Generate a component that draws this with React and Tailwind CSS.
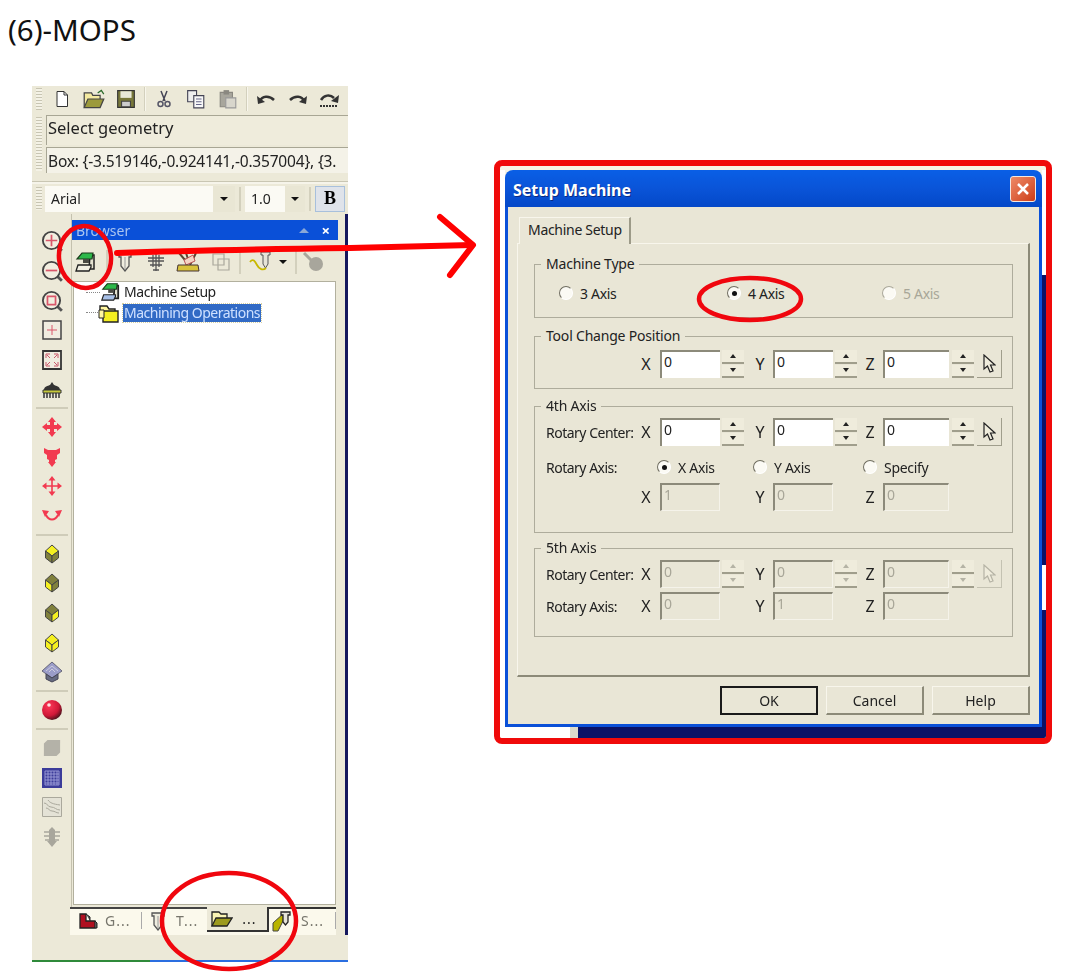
import React from 'react';

const Ico = ({ s = 18, children }) => (
  <svg width={s} height={s} viewBox="0 0 18 18" className="block shrink-0">{children}</svg>
);
const Ico2 = ({ w, h, box, children }) => (
  <svg width={w} height={h} viewBox={box} className="block shrink-0">{children}</svg>
);

// Top toolbar icons
const NewIcon = () => <Ico><path d="M4 1.5h7l3.500 3.500v11.500h-10.500z" fill="#fff" stroke="#333" /><path d="M11 1.500v3.500h3.500" fill="none" stroke="#333" /></Ico>;
const OpenIcon = () => <Ico2 w={22} h={22} box="0 0 18 18"><path d="M1 16V4h6l1 2h6v3" fill="#f3e9a0" stroke="#444" /><path d="M1 16l3-7h13l-3 7z" fill="#9c9a3c" stroke="#444" /><path d="M12 4l3-2 2 3" fill="none" stroke="#2a6a2a" /></Ico2>;
const SaveIcon = () => <Ico2 w={20} h={20} box="0 0 18 18"><path d="M1.500 1.500h15v15h-15z" fill="#77773a" stroke="#333" /><path d="M4 2h10v6H4z" fill="#e8e8d8" /><path d="M5 11h8v5H5z" fill="#ccc" stroke="#444" /></Ico2>;
const CutIcon = () => <Ico><path d="M6 1l4 10M12 1L8 11" stroke="#445" strokeWidth="1.500" /><circle cx="5.500" cy="14" r="2.500" fill="none" stroke="#556" strokeWidth="1.500" /><circle cx="12.500" cy="14" r="2.500" fill="none" stroke="#556" strokeWidth="1.500" /></Ico>;
const CopyIcon = () => <Ico2 w={20} h={20} box="0 0 18 18"><path d="M1.500 1.500h8v10h-8z" fill="#eee" stroke="#445" /><path d="M7 6h9v11H7z" fill="#f8f8f8" stroke="#445" /><path d="M9 9h5M9 11.500h5M9 14h5" stroke="#668" /></Ico2>;
const PasteIcon = () => <Ico2 w={20} h={20} box="0 0 18 18"><path d="M2 3h11v13H2z" fill="#a8a69c" stroke="#8a8880" /><path d="M5 1h5v4H5z" fill="#8a8880" /><path d="M7 8h9v9H7z" fill="#d8d6cc" stroke="#999" /></Ico2>;
const UndoIcon = ({ flip }) => (
  <Ico2 w={22} h={22} box="0 0 22 22">
    <g transform={flip ? 'translate(22 0) scale(-1 1)' : undefined}>
      <path d="M5 13c2-5 9-6 14-1" fill="none" stroke="#333" strokeWidth="2.500" />
      <path d="M2 8l1 8 7-2z" fill="#333" />
    </g>
  </Ico2>
);
const RedoAllIcon = () => (
  <Ico2 w={22} h={22} box="0 0 22 22">
    <path d="M2 12c3-5 9-6 13-2" fill="none" stroke="#333" strokeWidth="2.500" />
    <path d="M20 7l-1 8-7-2z" fill="#333" />
    <path d="M1 18h18" stroke="#333" strokeDasharray="2 1" strokeWidth="2" />
  </Ico2>
);

// Left view toolbar
const Zoom = ({ kind }) => (
  <Ico2 w={23} h={23} box="0 0 20 20">
    <path d="M15 15l4 4" stroke="#555" strokeWidth="2.500" />
    <circle cx="10" cy="10" r="7.500" fill="#f2eee0" stroke="#444" strokeWidth="1.600" />
    {kind === 'in' && <path d="M10 5v10M5 10h10" stroke="#d9566a" strokeWidth="1.500" />}
    {kind === 'out' && <path d="M5 10h10" stroke="#d9566a" strokeWidth="1.500" />}
    {kind === 'win' && <path d="M6.500 6.500h7v7h-7z" fill="none" stroke="#d9566a" strokeWidth="1.500" />}
  </Ico2>
);
const PlusBox = () => <Ico2 w={20} h={20} box="0 0 20 20"><path d="M1 1h18v18H1z" fill="#f0ece0" stroke="#444" strokeWidth="1.500" /><path d="M10 5v10M5 10h10" stroke="#d9566a" /></Ico2>;
const FitBox = () => <Ico2 w={20} h={20} box="0 0 20 20"><path d="M1 1h18v18H1z" fill="#f0ece0" stroke="#333" strokeWidth="1.800" /><path d="M4 8V4h4M12 4h4v4M16 12v4h-4M8 16H4v-4M5 5l3 3M15 5l-3 3M15 15l-3-3M5 15l3-3" fill="none" stroke="#c9566a" /></Ico2>;
const HatIcon = () => <Ico2 w={22} h={22} box="0 0 22 22"><path d="M3 12c0-4 4-4 6-5l2-3 2 3c2 1 6 1 6 5z" fill="#333" /><path d="M2 12h18v3H2z" fill="#c5c83c" stroke="#333" /><path d="M3 15v5M6 15v5M9 15v5M12 15v5M15 15v5M18 15v5" stroke="#333" strokeWidth="1.500" /></Ico2>;

const RED = '#f23a50';
const Move1 = () => <Ico2 w={20} h={20} box="0 0 20 20"><path d="M10 0l4 5h-2v3h3V6l5 4-5 4v-2h-3v3h2l-4 5-4-5h2v-3H5v2l-5-4 5-4v2h3V5H6z" fill={RED} /></Ico2>;
const Move2 = () => <Ico2 w={18} h={20} box="0 0 18 20"><path d="M1 1l4 2h8l4-2v5l-3 2 0 4-2 1v2h1l-4 5-4-5h1v-2l-2-1V8L1 6z" fill={RED} /></Ico2>;
const Move3 = () => <Ico2 w={20} h={20} box="0 0 20 20"><path d="M10 3v14M3 10h14" stroke={RED} strokeWidth="1.600" /><path d="M10 0l3.500 4.500h-7zM10 20l3.500-4.500h-7zM0 10l4.500-3.500v7zM20 10l-4.500-3.500v7z" fill={RED} /></Ico2>;
const Rotate = () => <Ico2 w={22} h={16} box="0 0 22 16"><path d="M5 7c3 6 9 6 12 0" fill="none" stroke={RED} strokeWidth="2" /><path d="M1 2l7 1-4 6zM21 2l-7 1 4 6z" fill={RED} /></Ico2>;
const Cube = ({ top, left, right }) => (
  <Ico2 w={16} h={20} box="0 0 16 20">
    <path d="M8 1l6.500 6L8 12 1.500 7z" fill={top} stroke="#444" />
    <path d="M1.500 7L8 12v7l-6.500-5z" fill={left} stroke="#444" />
    <path d="M14.500 7L8 12v7l6.500-5z" fill={right} stroke="#444" />
  </Ico2>
);
const CubeStack = () => <Ico2 w={22} h={22} box="0 0 22 22"><path d="M11 1l10 9-10 7L1 10z" fill="#9a9cc8" stroke="#667" /><path d="M5 13l6 4 6-4v5l-6 3-6-3z" fill="#666a80" stroke="#445" /><path d="M5 10l6-5 6 5M8 11l3-3 3 3" fill="none" stroke="#ccd" /></Ico2>;
const Ball = () => (
  <Ico2 w={22} h={22} box="0 0 22 22">
    <defs>
      <radialGradient id="ball" cx="0.35" cy="0.3" r="0.8">
        <stop offset="0.15" stopColor="#f23050" />
        <stop offset="0.6" stopColor="#d01838" />
        <stop offset="1" stopColor="#2a1014" />
      </radialGradient>
    </defs>
    <circle cx="11" cy="11" r="10" fill="url(#ball)" />
    <circle cx="8" cy="6" r="1.800" fill="#ffe0e0" />
  </Ico2>
);
const GreyBox = () => <Ico2 w={18} h={18} box="0 0 20 20"><path d="M5 1h14v14l-4 4H1V5z" fill="#b4b2a8" /></Ico2>;
const Grid = () => (
  <Ico2 w={20} h={20} box="0 0 20 20">
    <path d="M0 0h20v20H0z" fill="#3c3c9a" />
    <path d="M3 3v14M6 3v14M9 3v14M12 3v14M15 3v14M17 3v14M3 3h14M3 6h14M3 9h14M3 12h14M3 15h14M3 17h14" stroke="#a8a8e0" strokeWidth="0.800" />
  </Ico2>
);
const Relief = () => <Ico2 w={20} h={20} box="0 0 20 20"><path d="M0.500 0.500h19v19H0.500z" fill="#e4e2d6" stroke="#aaa89c" /><path d="M2 6c4 0 3 4 7 4s5 3 9 3M4 11c3 0 3 3 6 3s4 2 7 2M6 3c2 3 5 4 12 5" fill="none" stroke="#aaa89c" /></Ico2>;
const Stack = () => <Ico2 w={18} h={20} box="0 0 18 20"><path d="M6 3l3-3 3 3v11l2 0-5 6-5-6h2z" fill="#a8a69c" /><path d="M1 5h16M1 9h16M2 13h14" stroke="#a8a69c" strokeWidth="1.600" /></Ico2>;

// Browser toolbar
const Machine = ({ s = 22, tree }) => (
  <Ico2 w={s} h={s} box="0 0 22 22">
    <path d="M16 4h4v14h-5z" fill="#e4e2d0" stroke="#222" strokeWidth={tree ? 2 : 1.500} />
    <path d="M8 2h11l-1 6H3z" fill="#2db84a" stroke="#1a3a1a" strokeWidth="1.200" />
    <path d="M9 8h6v4H9z" fill="#4a4a44" />
    <path d="M4 14h13v2l-2 4H2z" fill={tree ? '#a8c0e8' : '#f2f0e4'} stroke="#222" strokeWidth="1.300" />
  </Ico2>
);
const ToolBit = () => <Ico2 w={20} h={20} box="0 0 20 20"><path d="M4 2h12v3h-2v9l-4 5-4-5V5H4z" fill="#efeddf" stroke="#555" strokeWidth="1.300" /><path d="M10 5v12" stroke="#999" /></Ico2>;
const Cross = () => <Ico2 w={20} h={20} box="0 0 20 20"><path d="M6 1h8M10 1v18M2 6h16M2 9h16M4 13h12M7 18h6M7 3v12M13 3v12" fill="none" stroke="#555" strokeWidth="1.300" /></Ico2>;
const Vise = () => <Ico2 w={24} h={24} box="0 0 24 24"><path d="M3 3h7l2 6-3 1zM20 3l-6 12" fill="none" stroke="#5a4632" strokeWidth="2" /><path d="M8 10l9-5 2 6-9 4z" fill="#f4d4c4" stroke="#b55" /><path d="M2 15h20l1 6H1z" fill="#d8c23c" stroke="#433" /></Ico2>;
const GreySquares = () => <Ico2 w={20} h={20} box="0 0 20 20"><path d="M2 2h11v11H2zM7 7h11v11H7z" fill="none" stroke="#aaa89c" strokeWidth="1.200" /></Ico2>;
const WaveTool = () => <Ico2 w={24} h={22} box="0 0 24 22"><path d="M12 1h9v3h-2v9l-2.500 4-2.500-4V4h-2z" fill="#e6e4d8" stroke="#555" /><path d="M1 11c3-4 5-1 7 3s6 6 9 3" fill="none" stroke="#c8b800" strokeWidth="1.800" /></Ico2>;
const MopGrey = () => <Ico2 w={22} h={22} box="0 0 22 22"><path d="M2 2l8 8" stroke="#a8a69c" strokeWidth="3" /><circle cx="14" cy="13" r="7" fill="#a8a69c" /></Ico2>;

// Tree and tab icons
const Folder = () => <Ico2 w={22} h={22} box="0 0 22 22"><path d="M2 8V4h7l2 3h6v3" fill="#fff6a0" stroke="#222" strokeWidth="1.400" /><path d="M5 9h15v11H5z" fill="#f4ee20" stroke="#222" strokeWidth="1.400" /><path d="M1 8h5v8H1z" fill="#fff6a0" stroke="#222" /></Ico2>;
const RedShape = () => <Ico2 w={20} h={20} box="0 0 20 20"><path d="M2 3h6v7h9v7H2z" fill="#b01020" stroke="#222" strokeWidth="1.300" /><path d="M8 3l4 3v4M17 10l2 2v5h-2" fill="#555" stroke="#222" /></Ico2>;
const TabFolder = () => <Ico2 w={22} h={22} box="0 0 22 22"><path d="M1 18V4h7l2 2h6v4" fill="#faf4b4" stroke="#222" strokeWidth="1.300" /><path d="M1 18l4-8h16l-5 8z" fill="#9c9a1e" stroke="#222" strokeWidth="1.300" /></Ico2>;
const TabStock = () => <Ico2 w={22} h={22} box="0 0 22 22"><path d="M1 13L12 3v6L6 21H1z" fill="#b8b400" stroke="#444" /><path d="M9 2h9v3h-2v7l-2.500 3L11 12V5H9z" fill="#e6e4d8" stroke="#222" strokeWidth="1.300" /></Ico2>;

const Cursor = ({ color = '#222' }) => (
  <svg width="14" height="20" viewBox="0 0 14 20">
    <path d="M2 1v14l3.500-3 2.500 6 3-1-2.500-6h4.500z" fill="#efecdc" stroke={color} strokeWidth="1.200" />
  </svg>
);

const grip = 'w-[6px] self-stretch my-[2px] bg-[repeating-linear-gradient(180deg,#c8c5b2_0_1px,#f4f2e6_1px_3px)]';
const ToolSep = () => <div className="w-[2px] h-[24px] mx-[2px] bg-[#d3d0bd] border-r border-[#f8f6ec]" />;
const Slot = ({ children }) => <div className="w-[32px] flex justify-center items-center">{children}</div>;
const DropArrow = () => <span className="block w-0 h-0 border-x-[4px] border-x-transparent border-t-[4px] border-t-[#111]" />;

const sideGroups = [
  [<Zoom kind="in" />, <Zoom kind="out" />, <Zoom kind="win" />, <PlusBox />, <FitBox />, <HatIcon />],
  [<Move1 />, <Move2 />, <Move3 />, <Rotate />],
  [
    <Cube top="#f5f020" left="#80803c" right="#80803c" />,
    <Cube top="#80803c" left="#f5f020" right="#80803c" />,
    <Cube top="#80803c" left="#80803c" right="#f5f020" />,
    <Cube top="#f5f020" left="#f5f020" right="#f5f020" />,
    <CubeStack />,
  ],
  [<Ball />],
  [<GreyBox />, <Grid />, <Relief />, <Stack />],
];

const LeftPanel = () => (
  <div className="w-[316px] h-[876px] shrink-0 ml-[32px] bg-[#ece9d8] flex flex-col blur-[0.4px] text-[#222]">
    <div className="h-[26px] flex items-center pl-[4px]">
      <div className={grip} />
      <div className="w-[4px]" />
      <Slot><NewIcon /></Slot>
      <Slot><OpenIcon /></Slot>
      <Slot><SaveIcon /></Slot>
      <ToolSep />
      <Slot><CutIcon /></Slot>
      <Slot><CopyIcon /></Slot>
      <Slot><PasteIcon /></Slot>
      <ToolSep />
      <Slot><UndoIcon /></Slot>
      <Slot><UndoIcon flip /></Slot>
      <Slot><RedoAllIcon /></Slot>
    </div>

    <div className="mt-[3px] h-[58px] flex pl-[4px]">
      <div className={grip} />
      <div className="flex-1 ml-[4px] flex flex-col gap-[2px] whitespace-nowrap overflow-hidden">
        <div className="h-[30px] pl-[1px] text-[16.500px] leading-[24px] bg-[#efecdc] border-l border-t border-[#a8a694]">Select geometry</div>
        <div className="h-[26px] pl-[1px] text-[15.500px] leading-[26px] tracking-[-0.2px] bg-[#f4f2e8] border-l border-t border-[#a8a694]">Box: {'{'}-3.519146,-0.924141,-0.357004{'}'}, {'{'}3.</div>
      </div>
    </div>

    <div className="mt-[8px] h-[3px] border-t border-[#c9c6b3] bg-[#f6f4ea]" />

    <div className="mt-[1px] h-[27px] flex items-center pl-[4px]">
      <div className={grip} />
      <div className="w-[3px]" />
      <div className="w-[190px] h-[26px] bg-[#fbfaf4] flex items-center justify-between text-[14px]">
        <span className="pl-[6px]">Arial</span>
        <span className="w-[22px] h-full bg-[#e9e6d4] flex items-center justify-center"><DropArrow /></span>
      </div>
      <div className="mx-[4px] w-[2px] h-[24px] bg-[#d3d0bd]" />
      <div className="w-[60px] h-[26px] bg-[#fbfaf4] flex items-center justify-between text-[14px]">
        <span className="pl-[6px]">1.0</span>
        <span className="w-[20px] h-full bg-[#e9e6d4] flex items-center justify-center"><DropArrow /></span>
      </div>
      <div className="mx-[4px] w-[2px] h-[24px] bg-[#d3d0bd]" />
      <div className="w-[30px] h-[26px] bg-[#dfe3ea] border border-[#a8c0dc] flex items-center justify-center text-[18px] font-bold text-black font-['Liberation_Serif',serif]">B</div>
    </div>

    <div className="flex-1 flex min-h-0 mt-[2px]">
      <div className="w-[40px] h-[695px] shrink-0 pt-[12px] border-r border-[#c4c1ae] flex flex-col items-center">
        {sideGroups.map((group, i) => (
          <React.Fragment key={i}>
            {i > 0 && <div className="w-[32px] h-[2px] my-[3px] bg-[#cfccb9]" />}
            {group.map((icon, j) => (
              <div key={j} className="h-[29.700px] flex items-center justify-center">{icon}</div>
            ))}
          </React.Fragment>
        ))}
      </div>

      <div className="flex-1 flex flex-col min-w-0 pt-[6px]">
        <div className="flex">
          <div className="w-[266px] h-[20px] bg-[#0a50d8] flex items-center justify-between pl-[4px] pr-[8px] text-[14px] text-[#a9c4f0]">
            <span>Browser</span>
            <span className="flex items-center gap-[12px]">
              <span className="w-0 h-0 border-x-[5px] border-x-transparent border-b-[5px] border-b-[#8aa8d8]" />
              <span className="text-white text-[15px] font-bold leading-none">×</span>
            </span>
          </div>
        </div>

        <div className="mt-[6px] h-[32px] flex items-center w-[266px]">
          <div className="w-[26px] flex justify-center"><Machine /></div>
          <div className="w-[2px] h-[24px] ml-[8px] mr-[5px] bg-[#d3d0bd]" />
          <div className="flex items-center gap-[10.500px] ml-[2px]">
            <ToolBit />
            <Cross />
            <Vise />
            <GreySquares />
          </div>
          <div className="w-[2px] h-[24px] ml-[8px] mr-[8px] bg-[#d3d0bd]" />
          <WaveTool />
          <span className="ml-[6px]"><DropArrow /></span>
          <div className="w-[2px] h-[24px] ml-[8px] mr-[5px] bg-[#d3d0bd]" />
          <MopGrey />
        </div>

        <div className="mt-[3px] ml-[1px] w-[263px] h-[624px] bg-white border border-[#b2b09e] text-[14px] leading-[18px]">
          <div className="pl-[12px]">
            <div className="flex items-center h-[20px]">
              <span className="w-[14px] border-t border-dotted border-[#888]" />
              <Machine s={20} tree />
              <span className="pl-[4px] tracking-[-0.45px]">Machine Setup</span>
            </div>
            <div className="flex items-center h-[21px]">
              <span className="w-[12px] border-t border-dotted border-[#888]" />
              <Folder />
              <span className="ml-[3px] bg-[#316ac5] text-[#cfe0ff] outline-dotted outline-1 outline-[#d8d0a0] px-[1px] whitespace-nowrap tracking-[-0.5px]">Machining Operations</span>
            </div>
          </div>
        </div>

        <div className="mt-[2px] -ml-[2px] w-[266px] h-[28px] bg-[#fbf9ec] flex items-start text-[14px] text-[#77766c]">
          <div className="w-[138px] h-[25px] border-t-2 border-[#444] flex items-center pl-[8px]">
            <RedShape />
            <span className="ml-[7px] w-[36px] tracking-[1px]">G...</span>
            <span className="w-[1px] h-[17px] bg-[#aaa]" />
            <span className="ml-[6px]"><ToolBit /></span>
            <span className="ml-[8px] tracking-[1px]">T...</span>
          </div>
          <div className="w-[60px] h-[25px] bg-[#ece9d8] border-b-2 border-[#333] flex items-center pl-[4px] text-[#222]">
            <TabFolder />
            <span className="ml-[9px] tracking-[1px]">...</span>
          </div>
          <div className="flex-1 h-[25px] border-t-2 border-l-2 border-[#333] flex items-center pl-[3px]">
            <TabStock />
            <span className="ml-[7px] w-[34px] tracking-[1px]">S...</span>
            <span className="w-[1px] h-[17px] bg-[#aaa]" />
          </div>
        </div>
      </div>

      <div className="w-[3px] h-[721px] bg-[#15185e]" />
    </div>

    <div className="h-[2px] flex shrink-0">
      <div className="w-[118px] bg-[#2f8a3a]" />
      <div className="flex-1 bg-[#2a6ee0]" />
    </div>
  </div>
);

const Radio = ({ on, disabled, label, className = '' }) => (
  <div className={`flex items-center h-[20px] ${className}`}>
    <span className={`w-[14px] h-[14px] rounded-full bg-[#fbfaf4] border-[1.500px] border-r-white border-b-white flex items-center justify-center ${disabled ? 'border-t-[#aaa89a] border-l-[#aaa89a]' : 'border-t-[#6f6d60] border-l-[#6f6d60]'}`}>
      {on && <span className="w-[5px] h-[5px] rounded-full bg-[#111]" />}
    </span>
    <span className={`ml-[7px] whitespace-nowrap tracking-[-0.3px] ${disabled ? 'text-[#a8a698]' : ''}`}>{label}</span>
  </div>
);

const Field = ({ value, disabled, w }) => (
  <div className={`${w} h-[28px] shrink-0 border-l-2 border-t-2 border-l-[#8c8a7a] border-t-[#8c8a7a] pl-[2px] leading-[20px] ${disabled ? 'bg-[#e9e6d6] text-[#a8a698] border-r border-b border-r-[#f5f3ea] border-b-[#f5f3ea]' : 'bg-white'}`}>
    {value}
  </div>
);

const Spin = ({ disabled, className }) => (
  <div className={`w-[22px] h-[28px] shrink-0 flex flex-col gap-[1px] ${className}`}>
    {['border-b-[4px]', 'border-t-[4px]'].map((dir, i) => (
      <div key={i} className="flex-1 bg-[#efecdc] border-b-2 border-[#a09e8c] flex items-center justify-center">
        <span className={`w-0 h-0 border-x-[3px] border-x-transparent ${dir} ${disabled ? 'border-t-[#b5b3a5] border-b-[#b5b3a5]' : 'border-t-[#222] border-b-[#222]'}`} />
      </div>
    ))}
  </div>
);

const AxisRow = ({ label, vals, spin, pick, disabled, className = '' }) => (
  <div className={`flex items-center h-[28px] ${className}`}>
    <div className="w-[91px] shrink-0 whitespace-nowrap tracking-[-0.5px]">{label}</div>
    <div className="w-[18px] mr-[5px] shrink-0 text-center text-[16px]">X</div>
    <Field w="w-[60px]" value={vals[0]} disabled={disabled} />
    {spin ? <Spin disabled={disabled} className="ml-[2px]" /> : <div className="w-[24px] shrink-0" />}
    <div className="w-[29px] shrink-0 text-center text-[16px] pl-[3px]">Y</div>
    <Field w="w-[60px]" value={vals[1]} disabled={disabled} />
    {spin ? <Spin disabled={disabled} className="ml-[2px]" /> : <div className="w-[24px] shrink-0" />}
    <div className="w-[26px] shrink-0 text-center text-[16px]">Z</div>
    <Field w="w-[66px]" value={vals[2]} disabled={disabled} />
    {spin && <Spin disabled={disabled} className="ml-[3px]" />}
    {pick && (
      <div className={`ml-[3px] w-[25px] h-[28px] flex items-center justify-center border-r border-b ${disabled ? 'border-[#c4c2b2]' : 'border-[#a09e8c]'}`}>
        <Cursor color={disabled ? '#b5b3a5' : '#222'} />
      </div>
    )}
  </div>
);

const Group = ({ title, h, className = '', children }) => (
  <fieldset className={`w-[479px] ml-[16px] ${h} border border-[#aeac9c] pl-[11px] ${className}`}>
    <legend className="-ml-[5px] px-[5px] h-[20px] leading-[20px] tracking-[-0.2px] whitespace-nowrap">{title}</legend>
    {children}
  </fieldset>
);

const DlgButton = ({ primary, children }) => (
  <div className={`w-[98px] h-[29px] flex items-center justify-center ${primary ? 'border-2 border-[#1a1a1a]' : 'border-t border-l border-[#f8f6ec] border-r-2 border-b-2 border-r-[#8c8a78] border-b-[#8c8a78]'}`}>
    {children}
  </div>
);

const Dialog = () => (
  <div className="w-[558px] h-[584px] mt-[74px] ml-[146px] shrink-0 border-[6px] border-[#f00a0a] rounded-[8px] bg-[#f6f3e6] flex flex-col overflow-hidden">
    <div className="h-[4px] shrink-0" />
    <div className="flex h-[557px]">
      <div className="w-[5px] bg-white" />
      <div className="w-[537px] flex flex-col rounded-t-[8px] overflow-hidden blur-[0.4px] text-[14px] text-[#222]">
        <div className="h-[37px] shrink-0 bg-gradient-to-b from-[#0a5fe6] via-[#0a54d8] to-[#0448c8] flex items-center justify-between pl-[8px] pr-[6px]">
          <span className="pt-[3px] text-white font-bold text-[16px] [text-shadow:1px_1px_0_#0a2a80]">Setup Machine</span>
          <span className="w-[26px] h-[26px] rounded-[3px] border border-[#f4e8e0] bg-gradient-to-br from-[#ee8a66] to-[#cc3a12] flex items-center justify-center">
            <svg width="16" height="16" viewBox="0 0 16 16"><path d="M3 3l10 10M13 3L3 13" stroke="#fff" strokeWidth="2.500" /></svg>
          </span>
        </div>
        <div className="flex-1 bg-[#e9e6d6] border-x-[3px] border-b-[3px] border-[#0a50d8] pl-[9px]">
          <div className="mt-[10px] ml-[2px] w-[112px] h-[27px] -mb-px relative z-10 bg-[#e9e6d6] border-t border-l border-[#f8f6ec] border-r-2 border-r-[#9c9a88] pl-[8px] leading-[24px] tracking-[-0.3px]">Machine Setup</div>
          <div className="w-[513px] h-[434px] border-t border-l border-[#f8f6ec] border-r-2 border-b-2 border-r-[#8c8a78] border-b-[#8c8a78] pt-[10px]">
            <Group title="Machine Type" h="h-[64px]">
              <div className="flex mt-[9px]">
                <Radio label="3 Axis" className="ml-[13px] w-[168px]" />
                <Radio on label="4 Axis" className="w-[155px]" />
                <Radio disabled label="5 Axis" />
              </div>
            </Group>
            <Group title="Tool Change Position" h="h-[63px]" className="mt-[8px]">
              <AxisRow vals={['0', '0', '0']} spin pick className="mt-[4px]" />
            </Group>
            <Group title="4th Axis" h="h-[137px]" className="mt-[7px]">
              <AxisRow label="Rotary Center:" vals={['0', '0', '0']} spin pick className="mt-[2px]" />
              <div className="flex mt-[11px] h-[20px]">
                <div className="w-[111px] tracking-[-0.5px]">Rotary Axis:</div>
                <Radio on label="X Axis" className="w-[96px]" />
                <Radio label="Y Axis" className="w-[110px]" />
                <Radio label="Specify" />
              </div>
              <AxisRow vals={['1', '0', '0']} disabled className="mt-[6px]" />
            </Group>
            <Group title="5th Axis" h="h-[99px]" className="mt-[5px]">
              <AxisRow label="Rotary Center:" vals={['0', '0', '0']} spin pick disabled className="mt-[2px]" />
              <AxisRow label="Rotary Axis:" vals={['0', '1', '0']} disabled className="mt-[4px]" />
            </Group>
          </div>
          <div className="w-[513px] mt-[9px] flex justify-end gap-[8px]">
            <DlgButton primary>OK</DlgButton>
            <DlgButton>Cancel</DlgButton>
            <DlgButton>Help</DlgButton>
          </div>
        </div>
      </div>
      <div className="w-[4px] flex flex-col">
        <div className="h-[105px] bg-white" />
        <div className="h-[290px] bg-[#0a1266]" />
        <div className="h-[45px] bg-white" />
        <div className="flex-1 bg-[#0a1266]" />
      </div>
    </div>
    <div className="flex flex-1">
      <div className="w-[70px] bg-white" />
      <div className="w-[8px] bg-[#dcdacb]" />
      <div className="flex-1 bg-[#0a1266]" />
    </div>
  </div>
);

const App = () => (
  <div className="relative w-[1090px] h-[976px] bg-white overflow-hidden font-['Noto_Sans',sans-serif]">
    <h1 className="h-[86px] pl-[8px] pt-[10px] text-[29.500px] leading-[40px] font-normal text-[#111]">(6)-MOPS</h1>
    <div className="flex items-start">
      <LeftPanel />
      <Dialog />
    </div>

    {/* hand drawn red marks over the screenshots */}
    <svg width="1090" height="976" viewBox="0 0 1090 976" fill="none" className="absolute inset-0 pointer-events-none">
      <ellipse cx="85" cy="257" rx="26" ry="31" stroke="#f0060e" strokeWidth="4.500" transform="rotate(-6 85 257)" />
      <ellipse cx="750" cy="299" rx="51" ry="21" stroke="#f0060e" strokeWidth="4.500" />
      <ellipse cx="229" cy="921" rx="67" ry="48" stroke="#f0060e" strokeWidth="4.500" />
      <path d="M117 253c80-3 150-4 233-5 40-1 80-2 122-3" stroke="#ff0000" strokeWidth="6" strokeLinecap="round" />
      <path d="M440 217l33 28-23 30" stroke="#ff0000" strokeWidth="6" strokeLinecap="round" strokeLinejoin="round" />
    </svg>
  </div>
);

export default App;
